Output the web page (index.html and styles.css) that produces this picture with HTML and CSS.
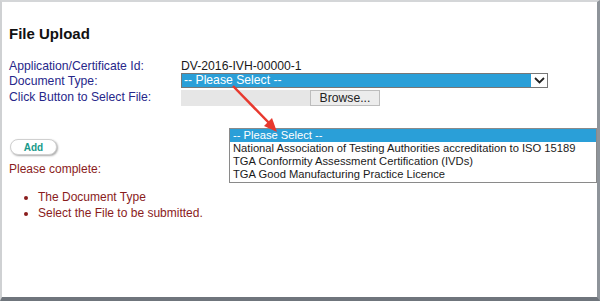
FILE: index.html
```html
<!DOCTYPE html>
<html lang="en">
<head>
    <meta charset="UTF-8">
    <title>File Upload</title>
    <link rel="stylesheet" href="styles.css">
</head>
<body>
    <div class="frame">
        <h1>File Upload</h1>

        <div class="form">
            <div class="label">Application/Certificate Id:</div>
            <div class="value">DV-2016-IVH-00000-1</div>

            <div class="label">Document Type:</div>
            <div class="select">
                <span class="select-text">-- Please Select --</span>
                <span class="select-btn">
                    <svg width="11" height="7" viewBox="0 0 11 7"><path d="M1 1 L5.5 5.5 L10 1" fill="none" stroke="#222" stroke-width="1.8"/></svg>
                </span>
            </div>

            <div class="label">Click Button to Select File:</div>
            <div class="file">
                <span class="file-name"></span>
                <span class="browse">Browse...</span>
            </div>
        </div>

        <button class="add">Add</button>

        <p class="errors">Please complete:</p>
        <ul class="error-list">
            <li>The Document Type</li>
            <li>Select the File to be submitted.</li>
        </ul>

        <!-- open dropdown shown over the page -->
        <div class="dropdown">
            <div class="option selected">-- Please Select --</div>
            <div class="option">National Association of Testing Authorities accreditation to ISO 15189</div>
            <div class="option">TGA Conformity Assessment Certification (IVDs)</div>
            <div class="option">TGA Good Manufacturing Practice Licence</div>
        </div>

        <svg class="arrow" width="60" height="60" viewBox="0 0 60 60">
            <line x1="3" y1="3" x2="40" y2="41" stroke="#e8392e" stroke-width="2.5"/>
            <polygon points="47,49 34,43 42,35" fill="#e8392e"/>
        </svg>
    </div>
</body>
</html>
```

FILE: styles.css
```css
* {
    box-sizing: border-box;
}
body {
    margin: 0;
    font-family: "Liberation Sans", Arial, sans-serif;
    background: #fff;
}
.frame {
    position: relative;
    width: 600px;
    height: 301px;
    border-top: 2px solid #d4d6d8;
    border-left: 2px solid #cfd1d3;
    border-right: 3px solid #8e949a;
    border-bottom: 4px solid #6f757c;
    padding: 0 7px;
    overflow: hidden;
}
h1 {
    font-size: 15px;
    font-weight: bold;
    color: #111;
    margin: 23px 0 17px;
}
.form {
    display: grid;
    grid-template-columns: 172px auto;
    align-items: center;
    font-size: 12.2px;
}
.label {
    color: #27278a;
    line-height: 14px;
}
.value {
    color: #1a1a1a;
    line-height: 14px;
}
.select {
    display: flex;
    width: 367px;
    height: 15px;
    border: 1px solid #777;
    background: #2a9fd8;
}
.select-text {
    flex: 1;
    color: #fff;
    line-height: 13px;
    padding-left: 2px;
}
.select-btn {
    width: 16px;
    background: #fff;
    display: flex;
    align-items: center;
    justify-content: center;
}
.file {
    display: flex;
    height: 16px;
    margin-top: 2px;
}
.file-name {
    width: 129px;
    background: #e6e6e6;
}
.browse {
    width: 70px;
    background: #ececec;
    border: 1px solid #bdbdbd;
    color: #222;
    text-align: center;
    line-height: 14px;
}
.add {
    display: block;
    margin: 33px 0 0 1px;
    width: 47px;
    height: 16px;
    padding: 0;
    border: 1px solid #d0d0d0;
    border-radius: 8px;
    background: #fff;
    box-shadow: 1px 1px 2px #aaa;
    color: #17998a;
    font-family: "Liberation Sans", Arial, sans-serif;
    font-size: 10px;
    font-weight: bold;
}
.errors {
    color: #8a1c1c;
    font-size: 12px;
    margin: 7px 0 0;
}
.error-list {
    color: #8a1c1c;
    font-size: 12px;
    margin: 13px 0 0;
    padding-left: 29px;
    line-height: 16px;
}
.dropdown {
    position: absolute;
    left: 227px;
    top: 126px;
    width: 368px;
    border: 1px solid #8a8a8a;
    background: #fff;
    font-size: 11.2px;
    color: #1a1a1a;
    padding-bottom: 1px;
}
.option {
    line-height: 13px;
    padding-left: 3px;
    white-space: nowrap;
}
.option.selected {
    background: #2a9fd8;
    color: #fff;
}
.arrow {
    position: absolute;
    left: 228px;
    top: 81px;
}
```
